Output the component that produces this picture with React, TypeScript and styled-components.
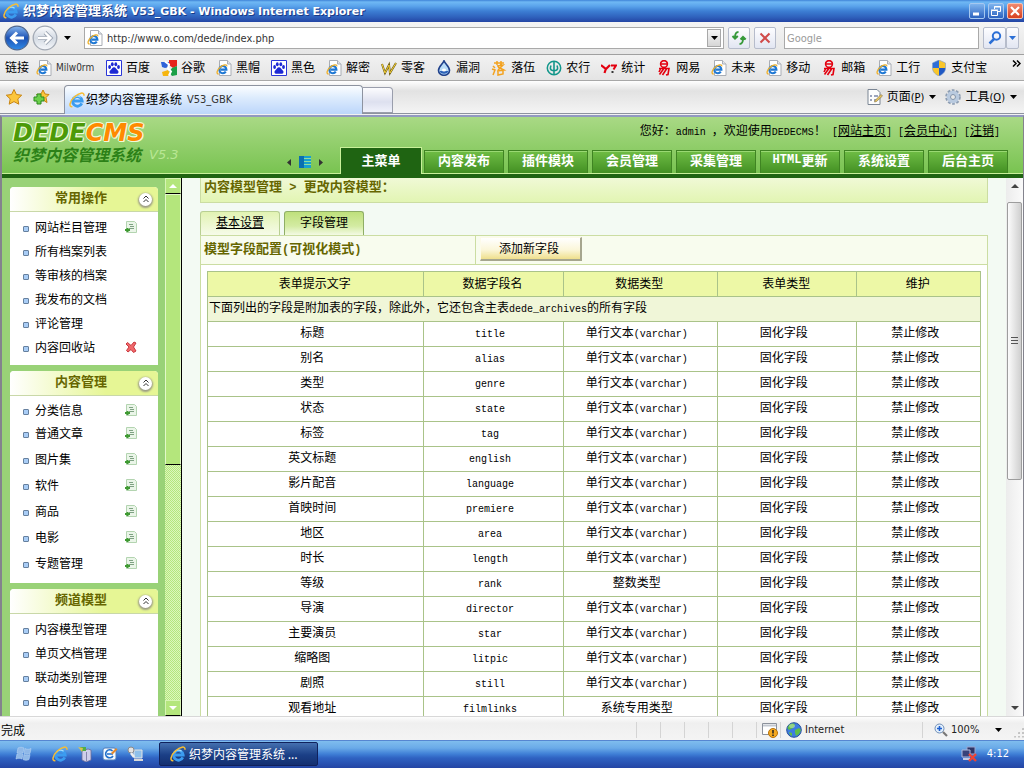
import React from 'react';
import styled, { createGlobalStyle, css } from 'styled-components';

const ui = '"DejaVu Sans Condensed", "Noto Sans CJK SC", sans-serif';
const page = '"Noto Sans CJK SC", sans-serif';

const Global = createGlobalStyle`
  *, *::before, *::after { box-sizing: border-box; }
  html, body { margin: 0; padding: 0; }
  body { font: 12px/16px ${page}; color: #000; background: #f1f1f1; }
  button, input { font: inherit; color: inherit; margin: 0; padding: 0; border: 0; background: none; }
  ul { list-style: none; margin: 0; padding: 0; }
  h2 { margin: 0; font: inherit; }
  svg { display: block; flex: none; }
`;

/* ---------- mixed script text ---------- */

const Mono = styled.span<{ $bold?: boolean }>`
  font-family: "Liberation Mono", monospace;
  font-size: ${p => (p.$bold ? 12 : 10)}px;
  line-height: 0;
  white-space: pre;
`;

const Mixed = ({ children, bold }: { children: string; bold?: boolean }) => (
  <>
    {children.split(/([\x20-\x7e]+)/).map((part, i) =>
      i % 2 ? <Mono key={i} $bold={bold}>{part}</Mono> : part,
    )}
  </>
);

/* ---------- icons ---------- */

const IeLogo = () => (
  <svg width="16" height="16" viewBox="0 0 16 16">
    <path d="M12.8 11.4A4.800 4.800 0 1 1 13.200 9H5" fill="none" stroke="#3b9cf0" strokeWidth="2.8" />
    <path d="M11.6 5.2A5 5 0 0 0 4.600 6" fill="none" stroke="#a5defc" strokeWidth="1.2" />
    <path d="M3.4 14.6C-.6 15.4.6 9.4 5.6 4.8 10 .8 15.4-.6 15 3.8" fill="none" stroke="#f7bd34" strokeWidth="1.5" />
  </svg>
);

const PageIcon = () => (
  <svg width="16" height="16" viewBox="0 0 16 16">
    <path d="M3.5.5h8L15 4v11.5H3.5z" fill="#fff" stroke="#a9adb5" />
    <path d="M11.5.5V4H15" fill="#e4e8ee" stroke="#a9adb5" />
    <path d="M9.8 11.6A3.600 3.600 0 1 1 10.400 9.600H4.500" fill="none" stroke="#1f78d4" strokeWidth="2.1" />
    <path d="M2.6 14C0 14 .8 10 4.2 7.2 7 4.8 11 3.6 10.8 6.4" fill="none" stroke="#eeb02a" strokeWidth="1.3" />
  </svg>
);

const Paw = () => (
  <svg width="16" height="16" viewBox="0 0 16 16">
    <path d="M.5.5h15v15H.5z" fill="#fff" stroke="#2a36d8" />
    <g fill="#1c28d4">
      <ellipse cx="3.6" cy="7" rx="1.4" ry="1.9" /><ellipse cx="6.3" cy="4.3" rx="1.4" ry="2" />
      <ellipse cx="9.8" cy="4.3" rx="1.4" ry="2" /><ellipse cx="12.5" cy="7" rx="1.4" ry="1.9" />
      <path d="M8 7.2c1.7 0 2.4 2 3.8 3.2 1.4 1.3.5 3.6-1.5 3.4-1.5-.2-3-.2-4.6 0-2 .2-2.9-2.1-1.5-3.4C5.6 9.2 6.3 7.2 8 7.2z" />
    </g>
  </svg>
);

const GoogleTile = () => (
  <svg width="16" height="16" viewBox="0 0 16 16">
    <path d="M0 2h8v5l-4 1-3-1z" fill="#2f62d9" />
    <path d="M8 0h8v6l-4 2-4-3z" fill="#e6231b" />
    <path d="M11 8l5-2v9l-5 1-3-4z" fill="#1ca047" />
    <path d="M1 12l6-2 2 3-2 3H2z" fill="#f6b50e" />
    <path d="M4 1.500l4 3-1 4 3 3-2 4" fill="none" stroke="#fff" strokeWidth="2" />
  </svg>
);

const Scribble = () => (
  <svg width="16" height="16" viewBox="0 0 16 16" fill="none">
    <path d="M1 4l3 9 4-8 1 8 6-10" stroke="#6d5a10" strokeWidth="2" />
    <path d="M1 4l3 9 4-8 1 8 6-10" stroke="#f2cf3a" />
  </svg>
);

const Drop = () => (
  <svg width="16" height="16" viewBox="0 0 16 16">
    <path d="M8 .8C9 4 13.5 6.5 13.5 10.5a5.5 4.8 0 0 1-11 0C2.5 6.5 7 4 8 .8z" fill="#b9dcf8" stroke="#20418c" strokeWidth="1.6" />
    <path d="M3.6 11h8.8a4.5 3.5 0 0 1-8.8 0z" fill="#2d62b8" />
    <ellipse cx="8" cy="10" rx="2" ry="1.5" fill="#fff" />
  </svg>
);

const Grass = () => (
  <svg width="16" height="16" viewBox="0 0 16 16" fill="none" stroke="#f3a21f" strokeWidth="1.5">
    <path d="M3 3h10M6 1v4M10 1v4M2 6l2 2M1 9l3 1-2 5M6 6l6-1-5 5M7 7l6 3-7 1M7 15v-4l5-1v4z" />
  </svg>
);

const AgriBank = () => (
  <svg width="16" height="16" viewBox="0 0 16 16" fill="none" stroke="#12968a">
    <circle cx="8" cy="8" r="6.7" strokeWidth="1.5" />
    <path d="M8 2v12M5 5.5C4 8 4 10 6.5 10.5H8M11 5.5c1 2.5 1 4.5-1.5 5H8" strokeWidth="1.6" />
  </svg>
);

const Stats = () => (
  <svg width="16" height="16" viewBox="0 0 16 16" fill="none">
    <path d="M0 5l5 4 4-4M5 8.5L3.5 13" stroke="#e3000f" strokeWidth="2.2" />
    <path d="M10 5.5h5l-2.500 4" stroke="#e3000f" strokeWidth="2" />
    <path d="M10.5 12h2" stroke="#222" strokeWidth="1.8" />
  </svg>
);

const NetEase = () => (
  <svg width="16" height="16" viewBox="0 0 16 16" fill="none" stroke="#e3000f" strokeWidth="1.6">
    <circle cx="8" cy="4" r="3.4" /><path d="M5 4h6M3 8.5h10l-1 6-2 .5M5 8l-2 4M7.5 9l-4 5.5M10.5 9l-4 6" />
  </svg>
);

const Shield = () => (
  <svg width="16" height="16" viewBox="0 0 16 16">
    <path d="M8 0l6.5 3v5H8zM8 8v8C4.5 14.5 1.5 12 1.5 8z" fill="#f9c62a" />
    <path d="M1.5 3L8 0v8H1.5z" fill="#2f6fd8" /><path d="M8 8h6.5c0 4-3 6.5-6.5 8z" fill="#2059c4" />
    <path d="M8 0l6.5 3v5c0 4-3 6.5-6.5 8-3.500-1.500-6.500-4-6.500-8V3z" fill="none" stroke="#7c9ac9" strokeWidth=".6" />
  </svg>
);

const Caret = ({ color = '#000' }: { color?: string }) => (
  <svg width="7" height="4" viewBox="0 0 7 4"><path d="M0 0h7L3.5 4z" fill={color} /></svg>
);

const CircleArrow = ({ forward }: { forward?: boolean }) => (
  <svg width="26" height="26" viewBox="0 0 26 26">
    <defs>
      <linearGradient id={forward ? 'fwd' : 'bck'} x2="0" y2="1">
        <stop offset="0" stopColor={forward ? '#fdfdfe' : '#86b6f0'} />
        <stop offset=".5" stopColor={forward ? '#d3dae3' : '#1d52b4'} />
        <stop offset="1" stopColor={forward ? '#f6f8fb' : '#2f8ae8'} />
      </linearGradient>
    </defs>
    <circle cx="13" cy="13" r="11.8" fill={`url(#${forward ? 'fwd' : 'bck'})`} stroke={forward ? '#a2a9b4' : '#51688f'} strokeWidth="1.3" />
    <path
      d={forward ? 'M6 13h12M13 7.5l5.5 5.5-5.5 5.5' : 'M20 13H8M13 7.5L7.5 13l5.5 5.5'}
      fill="none" stroke={forward ? '#9aa3b0' : '#fff'} strokeWidth={forward ? 4 : 3}
    />
    {forward && <path d="M6 13h12M13 7.5l5.5 5.5-5.5 5.5" fill="none" stroke="#fff" strokeWidth="2.4" />}
  </svg>
);

const Refresh = () => (
  <svg width="16" height="16" viewBox="0 0 16 16" fill="none" stroke="#36993a" strokeWidth="2">
    <path d="M7.5 2C4.5 2 4 4 4 8M1.5 6L4 8.500 6.800 6M8.500 14c3 0 3.500-2 3.500-6M9.500 9.500L12 7l2.700 2.500" />
  </svg>
);

const Cross = () => (
  <svg width="14" height="14" viewBox="0 0 14 14"><path d="M2.5 2.5l9 9M11.5 2.5l-9 9" stroke="#d04a4a" strokeWidth="2" /></svg>
);

const Lens = () => (
  <svg width="14" height="14" viewBox="0 0 14 14" fill="none" stroke="#2b6fd6">
    <circle cx="8.5" cy="5" r="3.7" strokeWidth="2" /><path d="M6 8l-4.5 4.5" strokeWidth="2.5" />
  </svg>
);

const Star = ({ add }: { add?: boolean }) => (
  <svg width="18" height="18" viewBox="0 0 18 18">
    <path d={add ? 'M11 2l2 4 4 .5-3 3 1 5-4-2.5-4.5 2 1-4.5-3-3 4.5-.5z' : 'M9 1.5l2.4 5 5.3.7-3.9 3.7 1 5.3L9 13.6l-4.8 2.6 1-5.3L1.3 7.2l5.3-.7z'} fill="#fcc63c" stroke="#c88512" />
    {add && <path d="M5 6h4v3h3v4H9v3H5v-3H2V9h3z" fill="#6cd04c" stroke="#2b8a1c" />}
  </svg>
);

const PageMenuIcon = () => (
  <svg width="16" height="16" viewBox="0 0 16 16">
    <path d="M1 .5h9l3 3v12H1z" fill="#fdfdfd" stroke="#7b8694" />
    <path d="M3 7h2M7 7h4M3 11h2M7 11h3" stroke="#7b87a8" strokeWidth="1.5" />
    <path d="M8 11.5l6-6L15.500 7l-6 5.500-2 .5z" fill="#e9c65c" stroke="#8c7a50" strokeWidth=".7" />
  </svg>
);

const Gear = () => (
  <svg width="16" height="16" viewBox="0 0 16 16" fill="none">
    <circle cx="8" cy="8" r="6.5" stroke="#8d9db2" strokeWidth="2.6" strokeDasharray="2.6 1.5" />
    <circle cx="8" cy="8" r="4.5" stroke="#b9cadf" strokeWidth="3.5" />
    <circle cx="8" cy="8" r="2.5" stroke="#7f92aa" />
  </svg>
);

const ListAdd = () => (
  <svg width="12" height="12" viewBox="0 0 12 12">
    <path d="M1.500.5h8l2 2v9h-10z" fill="#eaf5e8" stroke="#b3d4b0" />
    <path d="M4 3.500h4M5 5.500h4M4 7.500h5" stroke="#7fa183" /><path d="M0 9h5M2.500 7v4" stroke="#3f9a32" strokeWidth="2" />
  </svg>
);

const Trash = () => (
  <svg width="12" height="12" viewBox="0 0 12 12">
    <path d="M2.5 1.5l3.500 3L9 1l2 1-2.500 4 2.500 4-2.500 1.500L6 8.500 3 11 1.500 9.500 4 6 1 3z" fill="#f0686b" stroke="#c9383e" />
  </svg>
);

const Globe = () => (
  <svg width="16" height="16" viewBox="0 0 16 16">
    <circle cx="8" cy="8" r="7.3" fill="#3d7de0" stroke="#274f9a" />
    <path d="M3 3c3-2 5-2 6 0L7 6 3 8 1.5 6zM9 8l4-2 2 2-2 4-3 2-1-3zM3 10l3 1v3l-2-1z" fill="#5fbf47" />
    <ellipse cx="6" cy="4" rx="3" ry="2" fill="#fff" opacity=".35" />
  </svg>
);

const PopupIcon = () => (
  <svg width="16" height="16" viewBox="0 0 16 16">
    <path d="M.5 1.5h14v11H.5z" fill="#fff" stroke="#8c929c" /><path d="M1 3.5h13" stroke="#c3c8d0" strokeWidth="2" />
    <circle cx="11" cy="11" r="4.5" fill="#f5a91f" stroke="#b7720a" /><path d="M11 8v3.5M11 12.5V14" stroke="#222" strokeWidth="1.5" />
  </svg>
);

const ZoomIcon = () => (
  <svg width="14" height="14" viewBox="0 0 14 14">
    <circle cx="5.5" cy="5.5" r="4.5" fill="#e2effc" stroke="#6f8db5" /><path d="M9 9l4 4" stroke="#777" strokeWidth="2.2" />
    <path d="M3 5.5h5M5.5 3v5" stroke="#1d5fd0" strokeWidth="1.6" />
  </svg>
);

const StartFlag = () => (
  <svg width="18" height="18" viewBox="0 0 18 18" fill="#8fb8e8" stroke="#b7d3f2" strokeWidth=".6">
    <path d="M3 3c2-1 4-1 6 0L8 8C6 7 4 7 2 8zM10 3.5c2 1 4 1 6 0l-1 5c-2 1-4 1-6 0zM2 9c2-1 4-1 6 0l-1 5c-2-1-4-1-6 0zM9 9.5c2 1 4 1 6 0l-1 5c-2 1-4 1-6 0z" />
  </svg>
);

const ServerIcon = () => (
  <svg width="16" height="16" viewBox="0 0 16 16">
    <path d="M5 5l6-2 3 1v10l-5 2-4-2z" fill="#cfcfea" stroke="#6d6d98" strokeWidth=".8" />
    <path d="M9.5 6v9" stroke="#8686ae" /><path d="M3 1h6v4H4z" fill="#4fae4a" /><path d="M1 1l5 1-1 4z" fill="#d8c050" />
  </svg>
);

const DesktopIcon = () => (
  <svg width="16" height="16" viewBox="0 0 16 16">
    <rect x="1" y="2" width="13" height="12" rx="2" fill="#f5f9fd" stroke="#4c7cbc" />
    <path d="M10.5 5A4 4 0 1 0 11 10M5 8h6" fill="none" stroke="#1f6fcb" strokeWidth="1.6" />
    <path d="M9 7l5-5 1.5 1.5-5 5z" fill="#e58a2c" />
  </svg>
);

const PcIcon = () => (
  <svg width="16" height="16" viewBox="0 0 16 16">
    <path d="M7 4h8v8H7z" fill="#8fc0ea" stroke="#e5e5e5" /><path d="M7 14h9" stroke="#d9d9d9" strokeWidth="2" />
    <circle cx="4" cy="4" r="3" fill="#e3e3e3" stroke="#8a8a8a" /><path d="M4 7l3 4" stroke="#eee" strokeWidth="2.5" />
  </svg>
);

const NetworkOff = () => (
  <svg width="16" height="16" viewBox="0 0 16 16">
    <path d="M6 1h8v7H6z" fill="#2d3566" stroke="#9aa5cf" /><path d="M1 4h8v7H1z" fill="#39427a" stroke="#b0b9dc" /><path d="M2 13h7" stroke="#c4cae4" strokeWidth="2" />
    <path d="M8 8l7 7M15 8l-7 7" stroke="#ef4434" strokeWidth="2.4" />
  </svg>
);

/* ---------- browser frame ---------- */

const Screen = styled.div`
  display: flex;
  flex-direction: column;
  height: 100vh;
  overflow: hidden;
`;

const TitleBar = styled.header`
  display: flex;
  align-items: center;
  gap: 4px;
  height: 22px;
  padding: 0 1px 0 3px;
  flex: none;
  color: #fff;
  font: bold 11px/16px "DejaVu Sans", "Noto Sans CJK SC", sans-serif;
  text-shadow: 1px 1px 0 #1b3a86;
  background: linear-gradient(#3f83d8 0, #6fb8f4 2px, #5ba4ec 6px, #3d7fd4 11px, #2f62bd 17px, #2445a4 22px);
`;

const TitleText = styled.span`
  flex: 1;
  white-space: nowrap;
`;

const TitleCjk = styled.span`
  font-size: 13px;
`;

const WindowButton = styled.button<{ $close?: boolean }>`
  display: grid;
  place-items: center;
  width: 16px;
  height: 16px;
  border: 1px solid ${p => (p.$close ? '#f3c4b8' : '#a5c8f0')};
  border-radius: 2px;
  background: ${p => (p.$close ? 'linear-gradient(#f08a70, #d8401e)' : 'linear-gradient(#7fb4ee, #2c63c0)')};
`;

const WindowButtons = styled.div`
  display: flex;
  gap: 3px;
`;

const AddressRow = styled.div`
  display: flex;
  align-items: center;
  gap: 4px;
  height: 32px;
  flex: none;
  padding: 0 5px 0 4px;
  font-family: ${ui};
  background: linear-gradient(#f4f4f4, #e6e6e6);
`;

const BareButton = styled.button`
  display: flex;
  align-items: center;
`;

const HistoryButtons = styled.div`
  display: flex;
  align-items: center;
  gap: 2px;
  width: 76px;
`;

const HistoryCaret = styled(BareButton)`
  margin-left: 4px;
`;

const Field = styled.label<{ $search?: boolean }>`
  display: flex;
  align-items: center;
  gap: 4px;
  height: 22px;
  padding: 0 2px;
  border: 1px solid #a9a9a9;
  background: #fff;
  min-width: 0;
  ${p => (p.$search
    ? css`width: 195px; margin-left: 4px;`
    : css`flex: 1;`)}
`;

const FieldInput = styled.input`
  flex: 1;
  min-width: 0;
  height: 18px;
  outline: 0;
  color: #333;
  font-size: 11px;
  &::placeholder { color: #9a9a9a; opacity: 1; }
`;

const DropButton = styled.button`
  display: grid;
  place-items: center;
  width: 14px;
  height: 18px;
  border: 1px solid #a8a8a8;
  background: linear-gradient(#f6f6f6, #d6d6d6);
`;

const ToolButton = styled.button<{ $w: number }>`
  display: grid;
  place-items: center;
  width: ${p => p.$w}px;
  height: 22px;
  border: 1px solid #b6bccb;
  border-radius: 2px;
  background: linear-gradient(#fdfdff, #e2e6f2);
`;

const SearchButtons = styled.div`
  display: flex;
`;

const LinksBar = styled.nav`
  display: flex;
  align-items: center;
  height: 27px;
  flex: none;
  padding: 0 3px 0 5px;
  border-top: 1px solid #a0a0a0;
  border-bottom: 1px solid #a8a8a8;
  background: linear-gradient(#f2f2f2, #e4e4e4);
  font: 12px/16px ${ui};
`;

const LinksLabel = styled.span`
  margin-right: 7px;
`;

const Favorite = styled.a`
  display: flex;
  align-items: center;
  gap: 4px;
  margin-right: 11px;
  color: #000;
  text-decoration: none;
  white-space: nowrap;
`;

const FavoriteLatin = styled.span`
  width: 39px;
  font-size: 10px;
  color: #333;
`;

const More = styled(BareButton)`
  margin: 0 0 8px auto;
`;

const TabRow = styled.div`
  display: flex;
  align-items: flex-end;
  height: 33px;
  flex: none;
  padding-left: 5px;
  border-bottom: 1px solid #8d93a0;
  background: linear-gradient(#ffffff, #e2e2e2 10px, #f4f4f4);
  font-family: ${ui};
`;

const FavButtons = styled.div`
  display: flex;
  gap: 9px;
  width: 59px;
  height: 32px;
`;

const BrowserTab = styled.button`
  display: flex;
  align-items: center;
  gap: 1px;
  width: 299px;
  height: 29px;
  padding: 0 4px;
  border: 1px solid #8d93a0;
  border-bottom: 0;
  border-radius: 4px 4px 0 0;
  background: linear-gradient(#fbfdff, #dcebfd 12px, #bcd6fb);
  font-family: ${ui};
  margin-bottom: -1px;
`;

const TabLatin = styled.span`
  margin-left: 4px;
  font-size: 11px;
  color: #333;
`;

const NewTab = styled.button`
  width: 30px;
  height: 26px;
  border: 1px solid #9a9eac;
  border-left: 0;
  border-radius: 0 4px 0 0;
  background: linear-gradient(#fcfcfe, #dde0ef 14px, #f0f2fb);
`;

const CommandBar = styled.div`
  display: flex;
  align-items: center;
  gap: 9px;
  height: 32px;
  margin-left: auto;
  padding-right: 7px;
`;

const Command = styled.button`
  display: flex;
  align-items: center;
  gap: 4px;
  font-family: ${ui};
`;

const CommandText = styled.span`
  margin-right: 1px;
`;

const CommandKey = styled.span`
  font-size: 11px;
`;

const Viewport = styled.div`
  display: flex;
  flex-direction: column;
  flex: 1;
  min-height: 0;
  margin-top: 1px;
  border: solid #83838d;
  border-width: 2px 1px 0 2px;
  border-top-color: #9299c0;
`;

/* ---------- CMS header ---------- */

const CmsHeader = styled.header`
  display: flex;
  justify-content: space-between;
  flex: none;
  height: 61px;
  border-bottom: 4px solid #1f6412;
  background:
    linear-gradient(#c9f09a, #c9f09a) bottom / 100% 1px no-repeat,
    linear-gradient(#a9d985, #78c350);
`;

const Brand = styled.div`
  padding: 2px 0 0 11px;
  white-space: nowrap;
`;

const Wordmark = styled.div`
  font: italic bold 24px/28px "DejaVu Sans", sans-serif;
  color: #4c9a08;
  text-shadow: 1px 0 #eefbd8, -1px 0 #eefbd8, 0 1px #eefbd8, 0 -1px #eefbd8, 1px 1px #eefbd8, -1px -1px #eefbd8;
`;

const WordmarkAccent = styled.span`
  color: #ff8a00;
`;

const Tagline = styled.div`
  display: flex;
  gap: 8px;
  font: italic bold 16px/18px "Liberation Sans", "Noto Sans CJK SC", sans-serif;
  color: #2c8117;
`;

const Version = styled.span`
  font: italic 13px/16px "DejaVu Sans", sans-serif;
  color: #b9e794;
`;

const HeaderRight = styled.div`
  display: flex;
  flex-direction: column;
  justify-content: space-between;
  align-items: flex-end;
`;

const Greeting = styled.p`
  margin: 0;
  padding: 5px 23px 0 0;
  line-height: 16px;
  white-space: nowrap;
`;

const PlainLink = styled.a`
  color: #000;
`;

const NavRow = styled.div`
  display: flex;
  align-items: flex-end;
  padding-right: 15px;
`;

const FrameToggle = styled.div`
  display: flex;
  align-items: center;
  gap: 8px;
  height: 12px;
  margin: 0 17px 6px 0;
`;

const MainNav = styled.nav`
  display: flex;
  align-items: flex-end;
  gap: 4px;
`;

const NavTab = styled.a<{ $active?: boolean }>`
  display: flex;
  align-items: center;
  justify-content: center;
  color: #fff;
  font-size: 13px;
  font-weight: bold;
  line-height: 16px;
  text-decoration: none;
  white-space: nowrap;
  ${p => (p.$active
    ? css`
      width: 82px;
      height: 27px;
      margin-right: -2px;
      padding-bottom: 2px;
      border: solid #c9f09a;
      border-width: 1px 1px 0;
      background: #1f6412;
    `
    : css`
      width: 80px;
      height: 23px;
      margin-bottom: 1px;
      padding-bottom: 5px;
      border: 1px solid #3f8422;
      border-width: 1px 1px 0;
      box-shadow: inset 0 1px #9ad873;
      background: linear-gradient(#6fbd45, #439023);
    `)}
`;

/* ---------- sidebar ---------- */

const Workspace = styled.div`
  display: flex;
  flex: 1;
  min-height: 0;
`;

const Sidebar = styled.aside`
  display: flex;
  flex-direction: column;
  gap: 6px;
  width: 163px;
  flex: none;
  padding: 9px 7px 0 8px;
  overflow: hidden;
  background: #99d277;
`;

const Panel = styled.section`
  flex: none;
  background: #fff;
  border-radius: 4px 4px 0 0;
`;

const PanelHead = styled.div`
  display: flex;
  align-items: center;
  height: 25px;
  padding: 0 4px 0 45px;
  border-bottom: 1px solid #c9d8a8;
  border-radius: 4px 4px 0 0;
  background: linear-gradient(90deg, #fff, #e6f695 65%);
  color: #666600;
`;

const PanelTitle = styled.h2`
  flex: 1;
  padding-bottom: 4px;
  font: bold 13px/16px ${page};
`;

const Collapse = styled.button`
  display: grid;
  place-items: center;
  width: 13px;
  height: 13px;
  margin-right: 2px;
  border-radius: 50%;
  background: #fff;
  box-shadow: 0 1px 2px 1px #9b9b86;
`;

const PanelList = styled.ul<{ $step: number }>`
  padding: ${p => (p.$step === 26 ? '4px 0 7px' : '3px 0 6px')};
  li { height: ${p => p.$step}px; }
  ${p => p.$step === 26 && css`li:first-child { height: 20px; }`}
`;

const PanelItem = styled.li`
  display: flex;
  align-items: center;
  padding: 0 21px 0 13px;
`;

const Bullet = styled.span`
  width: 6px;
  height: 6px;
  margin: 3px 6px 0 0;
  border: 1px solid #66809e;
  border-radius: 1px;
  background: #a9cdf6;
`;

const ItemLink = styled.a`
  flex: 1;
  color: #000;
  text-decoration: none;
`;

const GreenScroll = styled.div`
  display: flex;
  flex-direction: column;
  width: 17px;
  flex: none;
  border-right: 1px solid #000;
  background: repeating-conic-gradient(#b4e67c 0 25%, #dcf7bd 0 50%) 0 0 / 2px 2px;
`;

const GreenButton = styled.button`
  display: grid;
  place-items: center;
  height: 16px;
  flex: none;
  border: 1px solid #d7f5b4;
  border-bottom-color: #000;
  background: #b4e67c;
`;

const GreenThumb = styled.div`
  flex: 270;
  border: 1px solid #e2f9c8;
  border-bottom-color: #000;
  background: #b4e67c;
`;

const Spacer = styled.div<{ $grow: number }>`
  flex: ${p => p.$grow};
`;

/* ---------- content ---------- */

const Content = styled.main`
  flex: 1;
  min-width: 0;
  padding: 0 18px;
  overflow: hidden;
  background: #f3faf3;
`;

const Crumbs = styled.div`
  height: 25px;
  padding: 1px 3px;
  border: 1px solid #cbdda2;
  border-top: 0;
  background: linear-gradient(#f0f9d6, #e2f5b3);
  font: bold 13px/16px "Liberation Sans", "Noto Sans CJK SC", sans-serif;
  color: #666600;
`;

const SubTabs = styled.div`
  display: flex;
  gap: 4px;
  height: 32px;
  padding-top: 8px;
`;

const SubTab = styled.a<{ $active?: boolean }>`
  width: 80px;
  padding-top: 2px;
  border: 1px solid ${p => (p.$active ? '#8fae66' : '#b9cf93')};
  border-bottom: 0;
  border-radius: 3px 3px 0 0;
  text-align: center;
  color: #000;
  text-decoration: ${p => (p.$active ? 'none' : 'underline')};
  background: ${p => (p.$active ? 'linear-gradient(#bfe07c, #d3eba2 14px, #f3fae4)' : 'linear-gradient(#e2f3b3, #f6fbe9)')};
`;

const Frame = styled.section`
  border: 1px solid #cbdda2;
  background: #fff;
`;

const FrameHead = styled.div`
  display: flex;
  height: 29px;
  border-bottom: 1px solid #cbdda2;
  background: #f8fcee;
`;

const FrameTitle = styled.h2`
  width: 35%;
  padding: 4px 3px;
  border-right: 1px solid #cbdda2;
  font: bold 13px/16px ${page};
  color: #666600;
`;

const AddButton = styled.button`
  width: 102px;
  height: 24px;
  margin: 1px 0 0 4px;
  padding: 0 3px 2px 0;
  border: 1px solid #fdfbe9;
  border-right: 2px solid #a6a68e;
  border-bottom: 2px solid #a6a68e;
  background: linear-gradient(#ffffff, #fbf6d8 12px, #efdf8c);
`;

const Sheet = styled.div`
  padding: 6px;
`;

const Fields = styled.table`
  width: 100%;
  table-layout: fixed;
  border-collapse: collapse;
  line-height: 16px;
  th, td {
    height: 25px;
    padding: 0 7px 5px 0;
    border: 1px solid #aac389;
    text-align: center;
    font-weight: normal;
    white-space: nowrap;
  }
  th { padding: 0 2px 3px 0; background: #edf8a6; }
`;

const NoteCell = styled.td`
  && { text-align: left; padding-left: 1px; background: #f0f6d8; }
`;

const GrayScroll = styled.div`
  display: flex;
  flex-direction: column;
  width: 17px;
  flex: none;
  padding: 0 1px;
  background: linear-gradient(90deg, #ececec, #fafafa);
`;

const GrayButton = styled.button`
  display: grid;
  place-items: center;
  height: 16px;
  flex: none;
`;

const GrayThumb = styled.div`
  display: grid;
  place-content: center;
  gap: 2px;
  flex: 277;
  border: 1px solid #9d9d9d;
  border-radius: 2px;
  background: linear-gradient(90deg, #fbfbfb, #cfcfcf);
`;

const Grip = styled.i`
  width: 7px;
  height: 1px;
  background: #555;
`;

/* ---------- status bar and taskbar ---------- */

const StatusBar = styled.footer`
  display: flex;
  align-items: center;
  height: 24px;
  flex: none;
  padding-top: 2px;
  border-top: 1px solid #d8d8d8;
  background: linear-gradient(#fdfdfd, #efefef 6px, #f4f4f4);
`;

const StatusText = styled.span`
  flex: 1;
  padding-left: 1px;
`;

const StatusCell = styled.div<{ $w: number }>`
  display: flex;
  align-items: center;
  gap: 3px;
  width: ${p => p.$w}px;
  height: 16px;
  padding-left: 5px;
  border-left: 1px solid #d4d4d4;
  font: 11px/16px "DejaVu Sans Condensed", sans-serif;
  color: #222;
`;

const ZoomCell = styled(StatusCell)`
  padding-left: 11px;
  ${BareButton} { margin-left: 13px; }
`;

const ResizeGrip = styled.span`
  align-self: flex-end;
  width: 11px;
  height: 11px;
  margin-left: auto;
  background: radial-gradient(circle, #c4c4c4 1px, transparent 1px) 0 0 / 4px 4px;
  clip-path: polygon(100% 0, 100% 100%, 0 100%);
`;

const Taskbar = styled.footer`
  display: flex;
  align-items: center;
  height: 28px;
  flex: none;
  padding: 0 15px;
  color: #fff;
  background: linear-gradient(#2d4fb4 0, #7fbdee 1px, #6aaae8 8px, #3f7fd6 14px, #2f62c2 18px, #2445a4 28px);
`;

const QuickLaunch = styled.div`
  display: flex;
  align-items: center;
  gap: 9px;
  margin: 0 16px 0 19px;
`;

const Task = styled.button`
  display: flex;
  align-items: center;
  gap: 3px;
  width: 159px;
  height: 24px;
  padding: 0 10px;
  border: 1px solid #10215c;
  border-radius: 2px;
  background: linear-gradient(#4570b0, #1b3f86 12px, #142f70);
`;

const Tray = styled.div`
  display: flex;
  align-items: center;
  gap: 10px;
  margin-left: auto;
  font: 11px/16px "DejaVu Sans Condensed", sans-serif;
`;

/* ---------- data ---------- */

const favorites: [string, React.ComponentType][] = [
  ['百度', Paw], ['谷歌', GoogleTile], ['黑帽', PageIcon], ['黑色', Paw], ['解密', PageIcon], ['零客', Scribble],
  ['漏洞', Drop], ['落伍', Grass], ['农行', AgriBank], ['统计', Stats], ['网易', NetEase], ['未来', PageIcon],
  ['移动', PageIcon], ['邮箱', NetEase], ['工行', PageIcon], ['支付宝', Shield],
];

const navItems = ['内容发布', '插件模块', '会员管理', '采集管理', 'HTML更新', '系统设置', '后台主页'];

type Item = { text: string; icon?: 'add' | 'trash' };
const add = (text: string): Item => ({ text, icon: 'add' });

const panels: { title: string; step: number; items: Item[] }[] = [
  {
    title: '常用操作', step: 24,
    items: [add('网站栏目管理'), { text: '所有档案列表' }, { text: '等审核的档案' }, { text: '我发布的文档' }, { text: '评论管理' }, { text: '内容回收站', icon: 'trash' }],
  },
  { title: '内容管理', step: 26, items: ['分类信息', '普通文章', '图片集', '软件', '商品', '电影', '专题管理'].map(add) },
  { title: '频道模型', step: 24, items: ['内容模型管理', '单页文档管理', '联动类别管理', '自由列表管理'].map(text => ({ text })) },
];

const varchar = '单行文本(varchar)';
const fields: [string, string, string][] = [
  ['标题', 'title', varchar], ['别名', 'alias', varchar], ['类型', 'genre', varchar], ['状态', 'state', varchar],
  ['标签', 'tag', varchar], ['英文标题', 'english', varchar], ['影片配音', 'language', varchar],
  ['首映时间', 'premiere', varchar], ['地区', 'area', varchar], ['时长', 'length', varchar],
  ['等级', 'rank', '整数类型'], ['导演', 'director', varchar], ['主要演员', 'star', varchar],
  ['缩略图', 'litpic', varchar], ['剧照', 'still', varchar], ['观看地址', 'filmlinks', '系统专用类型'],
];

const Triangle = ({ down, color }: { down?: boolean; color: string }) => (
  <svg width="8" height="4" viewBox="0 0 8 4"><path d={down ? 'M0 0h8L4 4z' : 'M0 4h8L4 0z'} fill={color} /></svg>
);

export default function App() {
  return (
    <Screen>
      <Global />
      <TitleBar>
        <IeLogo />
        <TitleText><TitleCjk>织梦内容管理系统</TitleCjk> V53_GBK - Windows Internet Explorer</TitleText>
        <WindowButtons>
          <WindowButton aria-label="最小化"><svg width="10" height="10"><path d="M1 8h6" stroke="#fff" strokeWidth="3" /></svg></WindowButton>
          <WindowButton aria-label="还原"><svg width="12" height="12" fill="none" stroke="#fff"><path d="M1.5 5.5h6v5h-6zM1 5h7M4.5 4V1.5h6v5H8M4 2h7" /></svg></WindowButton>
          <WindowButton $close aria-label="关闭"><svg width="12" height="12"><path d="M2 2l8 8M10 2l-8 8" stroke="#fff" strokeWidth="2.2" /></svg></WindowButton>
        </WindowButtons>
      </TitleBar>

      <AddressRow>
        <HistoryButtons>
          <BareButton aria-label="后退"><CircleArrow /></BareButton>
          <BareButton aria-label="前进"><CircleArrow forward /></BareButton>
          <HistoryCaret aria-label="历史"><Caret /></HistoryCaret>
        </HistoryButtons>
        <Field>
          <PageIcon />
          <FieldInput aria-label="地址" defaultValue="http://www.o.com/dede/index.php" />
          <DropButton aria-label="展开地址"><Caret /></DropButton>
        </Field>
        <ToolButton $w={22} aria-label="刷新"><Refresh /></ToolButton>
        <ToolButton $w={22} aria-label="停止"><Cross /></ToolButton>
        <Field $search><FieldInput aria-label="搜索" placeholder="Google" /></Field>
        <SearchButtons>
          <ToolButton $w={23} aria-label="搜索"><Lens /></ToolButton>
          <ToolButton $w={13} aria-label="搜索选项"><Caret color="#2b6fd6" /></ToolButton>
        </SearchButtons>
      </AddressRow>

      <LinksBar>
        <LinksLabel>链接</LinksLabel>
        <Favorite href="#"><PageIcon /><FavoriteLatin>Milw0rm</FavoriteLatin></Favorite>
        {favorites.map(([name, Icon]) => (
          <Favorite href="#" key={name}><Icon />{name}</Favorite>
        ))}
        <More aria-label="更多链接">
          <svg width="9" height="7" fill="none" stroke="#000" strokeWidth="1.5"><path d="M1 .5l3 3-3 3M5 .5l3 3-3 3" /></svg>
        </More>
      </LinksBar>

      <TabRow>
        <FavButtons>
          <BareButton aria-label="收藏中心"><Star /></BareButton>
          <BareButton aria-label="添加收藏"><Star add /></BareButton>
        </FavButtons>
        <BrowserTab><IeLogo />织梦内容管理系统<TabLatin>V53_GBK</TabLatin></BrowserTab>
        <NewTab aria-label="新选项卡" />
        <CommandBar>
          <Command><PageMenuIcon /><CommandText>页面<CommandKey>(<u>P</u>)</CommandKey></CommandText><Caret /></Command>
          <Command><Gear /><CommandText>工具<CommandKey>(<u>O</u>)</CommandKey></CommandText><Caret /></Command>
        </CommandBar>
      </TabRow>

      <Viewport>
        <CmsHeader>
          <Brand>
            <Wordmark>DEDE<WordmarkAccent>CMS</WordmarkAccent></Wordmark>
            <Tagline>织梦内容管理系统<Version>V5.3</Version></Tagline>
          </Brand>
          <HeaderRight>
            <Greeting>
              <Mixed>您好：admin ，欢迎使用DEDECMS！ [</Mixed><PlainLink href="#">网站主页</PlainLink>
              <Mixed>] [</Mixed><PlainLink href="#">会员中心</PlainLink>
              <Mixed>] [</Mixed><PlainLink href="#">注销</PlainLink><Mixed>]</Mixed>
            </Greeting>
            <NavRow>
              <FrameToggle>
                <BareButton aria-label="收起菜单"><svg width="4" height="7"><path d="M4 0v7L0 3.5z" fill="#333" /></svg></BareButton>
                <svg width="12" height="12"><path d="M0 0h12v12H0z" fill="#18a0cf" /><path d="M0 0h5v12H0z" fill="#0a6fb0" /><path d="M5 2.5h7M5 5.5h7M5 8.5h7" stroke="#8fdc9c" /></svg>
                <BareButton aria-label="展开菜单"><svg width="4" height="7"><path d="M0 0v7l4-3.5z" fill="#333" /></svg></BareButton>
              </FrameToggle>
              <MainNav>
                <NavTab href="#" $active>主菜单</NavTab>
                {navItems.map(name => <NavTab href="#" key={name}><Mixed bold>{name}</Mixed></NavTab>)}
              </MainNav>
            </NavRow>
          </HeaderRight>
        </CmsHeader>

        <Workspace>
          <Sidebar>
            {panels.map(panel => (
              <Panel key={panel.title}>
                <PanelHead>
                  <PanelTitle>{panel.title}</PanelTitle>
                  <Collapse aria-label={`收起${panel.title}`}>
                    <svg width="6" height="8" fill="none" stroke="#333"><path d="M.5 3.5L3 1l2.500 2.500M.5 7L3 4.500 5.500 7" /></svg>
                  </Collapse>
                </PanelHead>
                <PanelList $step={panel.step}>
                  {panel.items.map(item => (
                    <PanelItem key={item.text}>
                      <Bullet />
                      <ItemLink href="#">{item.text}</ItemLink>
                      {item.icon === 'add' && <ListAdd />}
                      {item.icon === 'trash' && <Trash />}
                    </PanelItem>
                  ))}
                </PanelList>
              </Panel>
            ))}
          </Sidebar>
          <GreenScroll>
            <GreenButton aria-label="向上滚动"><Triangle color="#fff" /></GreenButton>
            <GreenThumb />
            <Spacer $grow={236} />
            <GreenButton aria-label="向下滚动"><Triangle down color="#fff" /></GreenButton>
          </GreenScroll>

          <Content>
            <Crumbs><Mixed bold>内容模型管理 &gt; 更改内容模型：</Mixed></Crumbs>
            <SubTabs>
              <SubTab href="#">基本设置</SubTab>
              <SubTab href="#" $active>字段管理</SubTab>
            </SubTabs>
            <Frame>
              <FrameHead>
                <FrameTitle><Mixed bold>模型字段配置(可视化模式)</Mixed></FrameTitle>
                <AddButton>添加新字段</AddButton>
              </FrameHead>
              <Sheet>
                <Fields>
                  <colgroup>
                    {[28, 18, 20, 18, 16].map((w, i) => <col key={i} width={`${w}%`} />)}
                  </colgroup>
                  <thead>
                    <tr>{['表单提示文字', '数据字段名', '数据类型', '表单类型', '维护'].map(h => <th key={h}>{h}</th>)}</tr>
                  </thead>
                  <tbody>
                    <tr><NoteCell colSpan={5}><Mixed>下面列出的字段是附加表的字段，除此外，它还包含主表dede_archives的所有字段</Mixed></NoteCell></tr>
                    {fields.map(([label, name, type]) => (
                      <tr key={name}>
                        <td>{label}</td>
                        <td><Mixed>{name}</Mixed></td>
                        <td><Mixed>{type}</Mixed></td>
                        <td>固化字段</td>
                        <td>禁止修改</td>
                      </tr>
                    ))}
                  </tbody>
                </Fields>
              </Sheet>
            </Frame>
          </Content>
          <GrayScroll>
            <GrayButton aria-label="向上滚动"><Triangle color="#444" /></GrayButton>
            <Spacer $grow={8} />
            <GrayThumb><Grip /><Grip /><Grip /></GrayThumb>
            <Spacer $grow={221} />
            <GrayButton aria-label="向下滚动"><Triangle down color="#444" /></GrayButton>
          </GrayScroll>
        </Workspace>
      </Viewport>

      <StatusBar>
        <StatusText>完成</StatusText>
        {[1, 2, 3, 4, 5].map(n => <StatusCell key={n} $w={24} />)}
        <StatusCell $w={24}><PopupIcon /></StatusCell>
        <StatusCell $w={142}><Globe />Internet</StatusCell>
        <ZoomCell $w={102}>
          <ZoomIcon />100%<BareButton aria-label="缩放级别"><Caret /></BareButton>
          <ResizeGrip />
        </ZoomCell>
      </StatusBar>
      <Taskbar>
        <BareButton aria-label="开始"><StartFlag /></BareButton>
        <QuickLaunch><IeLogo /><ServerIcon /><DesktopIcon /><PcIcon /></QuickLaunch>
        <Task><IeLogo />织梦内容管理系统 ...</Task>
        <Tray><NetworkOff />4:12</Tray>
      </Taskbar>
    </Screen>
  );
}
